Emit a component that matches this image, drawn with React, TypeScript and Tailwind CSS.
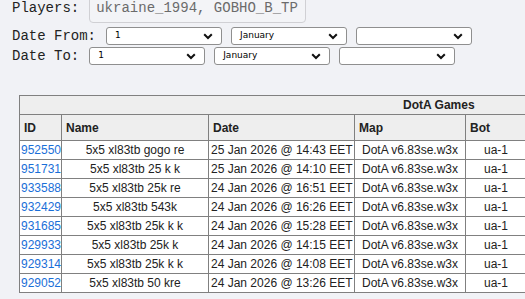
import React from "react";

type Game = { id: string; name: string; date: string };

const games: Game[] = [
  { id: "952550", name: "5x5 xl83tb gogo re", date: "25 Jan 2026 @ 14:43 EET" },
  { id: "951731", name: "5x5 xl83tb 25 k k", date: "25 Jan 2026 @ 14:10 EET" },
  { id: "933588", name: "5x5 xl83tb 25k re", date: "24 Jan 2026 @ 16:51 EET" },
  { id: "932429", name: "5x5 xl83tb 543k", date: "24 Jan 2026 @ 16:26 EET" },
  { id: "931685", name: "5x5 xl83tb 25k k k", date: "24 Jan 2026 @ 15:28 EET" },
  { id: "929933", name: "5x5 xl83tb 25k k", date: "24 Jan 2026 @ 14:15 EET" },
  { id: "929314", name: "5x5 xl83tb 25k k k", date: "24 Jan 2026 @ 14:08 EET" },
  { id: "929052", name: "5x5 xl83tb 50 kre", date: "24 Jan 2026 @ 13:26 EET" },
];

function Chevron() {
  return (
    <svg width="10" height="7" viewBox="0 0 10 7" className="shrink-0">
      <polyline points="1.2,1.2 5,5 8.8,1.2" fill="none" stroke="#111" strokeWidth="2" />
    </svg>
  );
}

function FakeSelect({ value }: { value: string }) {
  return (
    <div className="flex h-[18px] w-[116px] items-center justify-between rounded-[3px] border border-[#8f8f8f] bg-white pl-[8px] pr-[8px] text-[9px] text-black [font-family:'DejaVu_Sans',sans-serif]">
      <span>{value}</span>
      <Chevron />
    </div>
  );
}

const mono = "[font-family:'Liberation_Mono',monospace] text-[14px] leading-[18px] text-[#222]";

export default function App() {
  return (
    <div className="h-[299px] w-[525px] overflow-hidden bg-[#f1f2f6]">
      <div className="mt-[-7px] flex h-[30px] items-center pl-[12px]">
        <span className={mono}>Players:</span>
        <div className="ml-[10px] flex h-[30px] w-[217px] items-center rounded-[4px] border border-[#d0d0d4] bg-[#f3f4f7] pl-[6px] [font-family:'Liberation_Mono',monospace] text-[14px] text-[#6b6b6b]">
          ukraine_1994, GOBHO_B_TP
        </div>
      </div>

      <div className="mt-[4px] flex h-[18px] items-center pl-[12px]">
        <span className={mono}>Date From:</span>
        <div className="ml-[10px] flex gap-[9px]">
          <FakeSelect value="1" />
          <FakeSelect value="January" />
          <FakeSelect value="" />
        </div>
      </div>

      <div className="mt-[2px] flex h-[18px] items-center pl-[12px]">
        <span className={mono}>Date To:</span>
        <div className="ml-[10px] flex gap-[9px]">
          <FakeSelect value="1" />
          <FakeSelect value="January" />
          <FakeSelect value="" />
        </div>
      </div>

      <table className="ml-[19px] mt-[30px] w-[507px] table-fixed border-collapse bg-white text-[12px] text-[#222] [font-family:'Liberation_Sans',Arial,sans-serif]">
        <colgroup>
          <col className="w-[42px]" />
          <col className="w-[147px]" />
          <col className="w-[146px]" />
          <col className="w-[111px]" />
          <col className="w-[61px]" />
        </colgroup>
        <thead>
          <tr className="h-[19px] bg-[#eeeeee]">
            <th colSpan={5} className="border border-[#808080] p-0 pl-[383px] text-left font-bold">
              DotA Games
            </th>
          </tr>
          <tr className="h-[26px] bg-[#eeeeee] text-left font-bold">
            <th className="border border-[#808080] p-0 pl-[4px]">ID</th>
            <th className="border border-[#808080] p-0 pl-[4px]">Name</th>
            <th className="border border-[#808080] p-0 pl-[4px]">Date</th>
            <th className="border border-[#808080] p-0 pl-[4px]">Map</th>
            <th className="border border-[#808080] p-0 pl-[4px]">Bot</th>
          </tr>
        </thead>
        <tbody>
          {games.map((g) => (
            <tr key={g.id} className="h-[19px]">
              <td className="border border-[#808080] p-0 pl-[1px] text-[#1a6fd8]">{g.id}</td>
              <td className="border border-[#808080] p-0 text-center">{g.name}</td>
              <td className="border border-[#808080] p-0 pl-[2px] whitespace-nowrap">{g.date}</td>
              <td className="border border-[#808080] p-0 text-center whitespace-nowrap">DotA v6.83se.w3x</td>
              <td className="border border-[#808080] p-0 text-center">ua-1</td>
            </tr>
          ))}
        </tbody>
      </table>
    </div>
  );
}
